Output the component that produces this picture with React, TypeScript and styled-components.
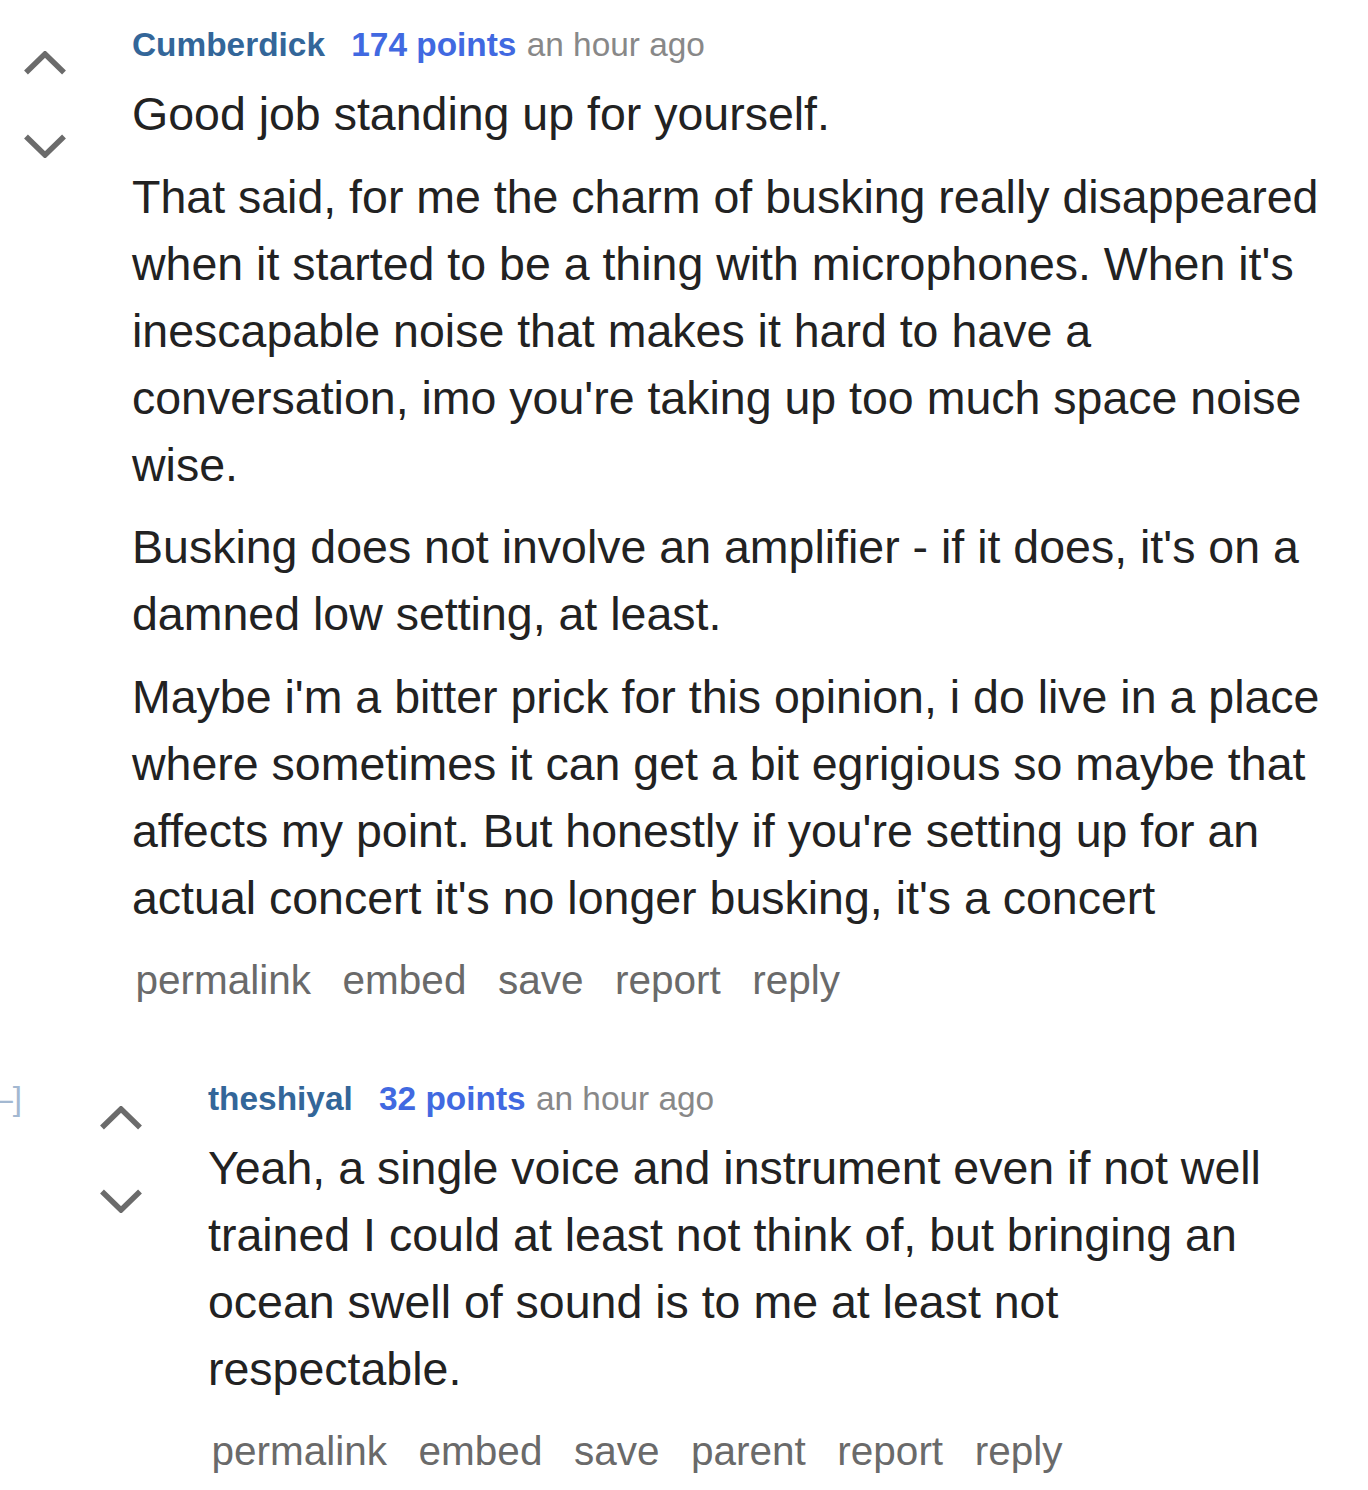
import React from "react";
import styled, { createGlobalStyle } from "styled-components";

const GlobalStyle = createGlobalStyle`
  html, body {
    margin: 0;
    padding: 0;
    background: #ffffff;
  }
  body {
    font-family: "Liberation Sans", Arial, Helvetica, sans-serif;
    -webkit-font-smoothing: antialiased;
  }
`;

const Page = styled.div`
  width: 1368px;
  box-sizing: border-box;
  padding-top: 25px;
  padding-bottom: 20px;
  overflow: hidden;
`;

const Thread = styled.div`
  display: flex;
  flex-direction: column;
  gap: 74px;
`;

const CommentRow = styled.div<{ $depth: number }>`
  position: relative;
  display: flex;
  align-items: flex-start;
  padding-left: ${(p) => p.$depth * 76}px;
  padding-right: ${(p) => 18 + p.$depth * 50}px;
`;

const Toggle = styled.a`
  position: absolute;
  left: -15px;
  top: 0;
  font-size: 33.4px;
  line-height: 40px;
  color: #a3b8d1;
  white-space: nowrap;
  text-decoration: none;
`;

const Midcol = styled.div<{ $depth: number }>`
  flex: 0 0 132px;
  box-sizing: border-box;
  padding-left: 23px;
  padding-top: ${(p) => (p.$depth > 0 ? 27 : 26)}px;
  display: flex;
  flex-direction: column;
  gap: 59px;
`;

const ArrowBox = styled.svg`
  display: block;
  width: 44px;
  height: 24px;
`;

const Entry = styled.div`
  flex: 1 1 auto;
  min-width: 0;
`;

const Tagline = styled.p`
  margin: 0;
  font-size: 33.4px;
  line-height: 40px;
  color: #888888;
  white-space: nowrap;
`;

const Author = styled.a`
  font-weight: bold;
  color: #336699;
  text-decoration: none;
  margin-right: 17px;
`;

const Score = styled.span`
  font-weight: bold;
  color: #4169e1;
  margin-right: 1px;
`;

const Time = styled.time`
  color: #888888;
`;

const Body = styled.div`
  margin-top: 16px;
  font-size: 46.5px;
  line-height: 67px;
  color: #222222;
`;

const Para = styled.p`
  margin: 0 0 15.5px;
`;

const Buttons = styled.ul`
  list-style: none;
  margin: 23px 0 0;
  padding: 0 0 0 3.5px;
  display: flex;
  gap: 31.5px;
  font-size: 40.5px;
  line-height: 50px;
`;

const ButtonLink = styled.a`
  color: #6a6a6a;
  text-decoration: none;
`;

const Arrow: React.FC<{ dir: "up" | "down" }> = ({ dir }) => (
  <ArrowBox viewBox="0 0 44 24" aria-hidden="true">
    <polyline
      points={dir === "up" ? "3,21.5 22,3 41,21.5" : "3,2.5 22,21 41,2.5"}
      fill="none"
      stroke="#6b6b6b"
      strokeWidth="5.5"
      strokeLinecap="butt"
      strokeLinejoin="miter"
    />
  </ArrowBox>
);

type CommentData = {
  author: string;
  points: number;
  time: string;
  paragraphs: string[];
  buttons: string[];
  depth: number;
};

const comments: CommentData[] = [
  {
    author: "Cumberdick",
    points: 174,
    time: "an hour ago",
    depth: 0,
    paragraphs: [
      "Good job standing up for yourself.",
      "That said, for me the charm of busking really disappeared when it started to be a thing with microphones. When it's inescapable noise that makes it hard to have a conversation, imo you're taking up too much space noise wise.",
      "Busking does not involve an amplifier - if it does, it's on a damned low setting, at least.",
      "Maybe i'm a bitter prick for this opinion, i do live in a place where sometimes it can get a bit egrigious so maybe that affects my point. But honestly if you're setting up for an actual concert it's no longer busking, it's a concert",
    ],
    buttons: ["permalink", "embed", "save", "report", "reply"],
  },
  {
    author: "theshiyal",
    points: 32,
    time: "an hour ago",
    depth: 1,
    paragraphs: [
      "Yeah, a single voice and instrument even if not well trained I could at least not think of, but bringing an ocean swell of sound is to me at least not respectable.",
    ],
    buttons: ["permalink", "embed", "save", "parent", "report", "reply"],
  },
];

const Comment: React.FC<{ c: CommentData }> = ({ c }) => (
  <CommentRow $depth={c.depth}>
    {c.depth > 0 && <Toggle href="#">[–]</Toggle>}
    <Midcol $depth={c.depth}>
      <Arrow dir="up" />
      <Arrow dir="down" />
    </Midcol>
    <Entry>
      <Tagline>
        <Author href="#">{c.author}</Author> <Score>{c.points} points</Score>{" "}
        <Time>{c.time}</Time>
      </Tagline>
      <Body>
        {c.paragraphs.map((p, i) => (
          <Para key={i}>{p}</Para>
        ))}
      </Body>
      <Buttons>
        {c.buttons.map((b) => (
          <li key={b}>
            <ButtonLink href="#">{b}</ButtonLink>
          </li>
        ))}
      </Buttons>
    </Entry>
  </CommentRow>
);

export default function App() {
  return (
    <>
      <GlobalStyle />
      <Page>
        <Thread>
          {comments.map((c) => (
            <Comment key={c.author} c={c} />
          ))}
        </Thread>
      </Page>
    </>
  );
}
